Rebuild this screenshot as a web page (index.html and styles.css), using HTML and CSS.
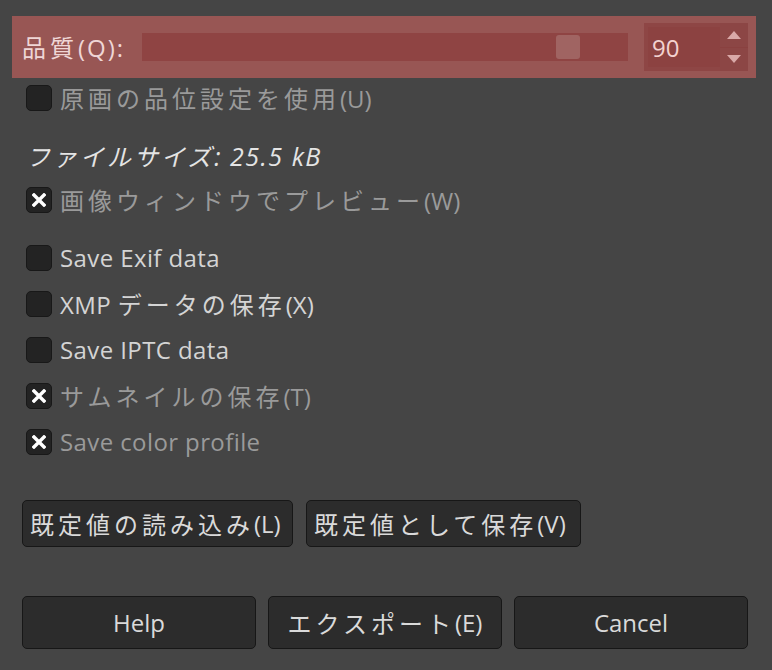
FILE: index.html
```html
<!DOCTYPE html>
<html lang="ja">
<head>
<meta charset="utf-8">
<link rel="stylesheet" href="styles.css">
</head>
<body>
<div class="dialog">
  <div class="quality">
    <span class="qlabel"><span class="j">品質</span><span class="qk">(Q):</span></span>
    <div class="trough"><div class="thumb"></div></div>
    <div class="spin">
      <div class="entry">90</div>
      <div class="arrows">
        <div class="arrow up"><svg width="14" height="8" viewBox="0 0 14 8"><path d="M7 0 L14 8 L0 8 Z" fill="#d9a9a8"/></svg></div>
        <div class="arrow down"><svg width="14" height="8" viewBox="0 0 14 8"><path d="M0 0 L14 0 L7 8 Z" fill="#d9a9a8"/></svg></div>
      </div>
    </div>
  </div>

  <div class="row r-first"><span class="cb"></span><span class="lbl dim"><span class="j">原画の品位設定を使用</span>(U)</span></div>
  <div class="row r-size"><span class="fsize"><span class="j">ファイルサイズ</span><span class="num">: 25.5 kB</span></span></div>
  <div class="row r-preview"><span class="cb on"><svg width="14" height="14" viewBox="0 0 14 14"><path d="M2 2 L12 12 M12 2 L2 12" stroke="#fff" stroke-width="3.4" stroke-linecap="square"/></svg></span><span class="lbl dim"><span class="j">画像ウィンドウでプレビュー</span>(W)</span></div>
  <div class="row r-exif"><span class="cb"></span><span class="lbl lat">Save Exif data</span></div>
  <div class="row"><span class="cb"></span><span class="lbl"><span class="lat">XMP </span><span class="j">データの保存</span>(X)</span></div>
  <div class="row"><span class="cb"></span><span class="lbl lat">Save IPTC data</span></div>
  <div class="row"><span class="cb on"><svg width="14" height="14" viewBox="0 0 14 14"><path d="M2 2 L12 12 M12 2 L2 12" stroke="#fff" stroke-width="3.4" stroke-linecap="square"/></svg></span><span class="lbl dim"><span class="j">サムネイルの保存</span>(T)</span></div>
  <div class="row"><span class="cb on"><svg width="14" height="14" viewBox="0 0 14 14"><path d="M2 2 L12 12 M12 2 L2 12" stroke="#fff" stroke-width="3.4" stroke-linecap="square"/></svg></span><span class="lbl dim lat">Save color profile</span></div>

  <div class="defaults">
    <button class="btn b-load"><span class="j">既定値の読み込み</span>(L)</button>
    <button class="btn b-save"><span class="j">既定値として保存</span>(V)</button>
  </div>

  <div class="actions">
    <button class="btn act">Help</button>
    <button class="btn act"><span class="j">エクスポート</span>(E)</button>
    <button class="btn act">Cancel</button>
  </div>
</div>
</body>
</html>
```

FILE: styles.css
```css
* { box-sizing: border-box; }
html, body {
  margin: 0;
  padding: 0;
  background: #454545;
  width: 772px;
  height: 670px;
  overflow: hidden;
}
body {
  font-family: "Open Sans", "Noto Sans CJK JP", sans-serif;
  font-size: 24px;
  color: #d6d6d6;
}
.j { letter-spacing: 4px; }
.lat { letter-spacing: 0.4px; }
.dialog {
  padding: 16px 16px 0 12px;
  display: flex;
  flex-direction: column;
}
.quality {
  height: 62px;
  background: #985654;
  display: flex;
  align-items: center;
  padding: 0 8px 0 10px;
}
.qlabel {
  color: #efd6d6;
  width: 120px;
  flex: none;
  position: relative;
  top: -1px;
  white-space: nowrap;
}
.qk { letter-spacing: 2px; }
.trough {
  width: 486px;
  height: 28px;
  background: #8f4443;
  display: flex;
  align-items: center;
  padding-left: 414px;
  flex: none;
}
.thumb {
  width: 24px;
  height: 24px;
  background: #a06462;
  border-radius: 3px;
}
.spin {
  margin-left: auto;
  width: 104px;
  height: 48px;
  background: #8e4645;
  display: flex;
  padding: 4px 0 4px 4px;
}
.entry {
  flex: 1;
  background: #8c4241;
  color: #f3d2d0;
  display: flex;
  align-items: center;
  padding-left: 4px;
}
.arrows {
  width: 28px;
  display: flex;
  flex-direction: column;
  margin-top: -4px;
  margin-bottom: -4px;
  background: #8c4645;
}
.arrow {
  flex: 1;
  display: flex;
  align-items: center;
  justify-content: center;
}
.arrow.up { border-bottom: 1px solid #8a4140; }
.row {
  height: 40px;
  display: flex;
  align-items: center;
  padding-left: 14px;
  margin-top: 6px;
  white-space: nowrap;
}
.row .lbl, .row .fsize { position: relative; top: -1px; }
.r-first { margin-top: 0; }
.r-size { margin-top: 18px; padding-left: 14px; }
.r-preview { margin-top: 4px; }
.r-exif { margin-top: 18px; }
.cb {
  width: 26px;
  height: 26px;
  background: #232323;
  border: 1px solid #181818;
  border-radius: 5px;
  flex: none;
  display: flex;
  align-items: center;
  justify-content: center;
  margin-right: 8px;
}
.lbl { color: #d4d4d4; }
.lbl.dim { color: #9a9a9a; }
.fsize {
  font-style: italic;
  color: #e4e4e4;
}
.fsize .j { letter-spacing: 3px; }
.fsize .num { font-size: 25px; letter-spacing: 1.5px; }
.btn {
  font-family: inherit;
  font-size: 24px;
  color: #dadada;
  background: #2c2c2c;
  border: 1px solid #171717;
  border-radius: 5px;
  margin: 0;
  padding: 0 7px;
  height: 47px;
  display: flex;
  align-items: center;
  white-space: nowrap;
}
.defaults {
  display: flex;
  gap: 13px;
  margin-top: 38px;
  padding-left: 10px;
}
.b-load { width: 271px; }
.b-save { width: 275px; }
.actions {
  display: flex;
  gap: 12px;
  margin-top: 49px;
  padding-left: 10px;
  padding-right: 8px;
}
.act {
  flex: 1;
  height: 53px;
  justify-content: center;
}
```
